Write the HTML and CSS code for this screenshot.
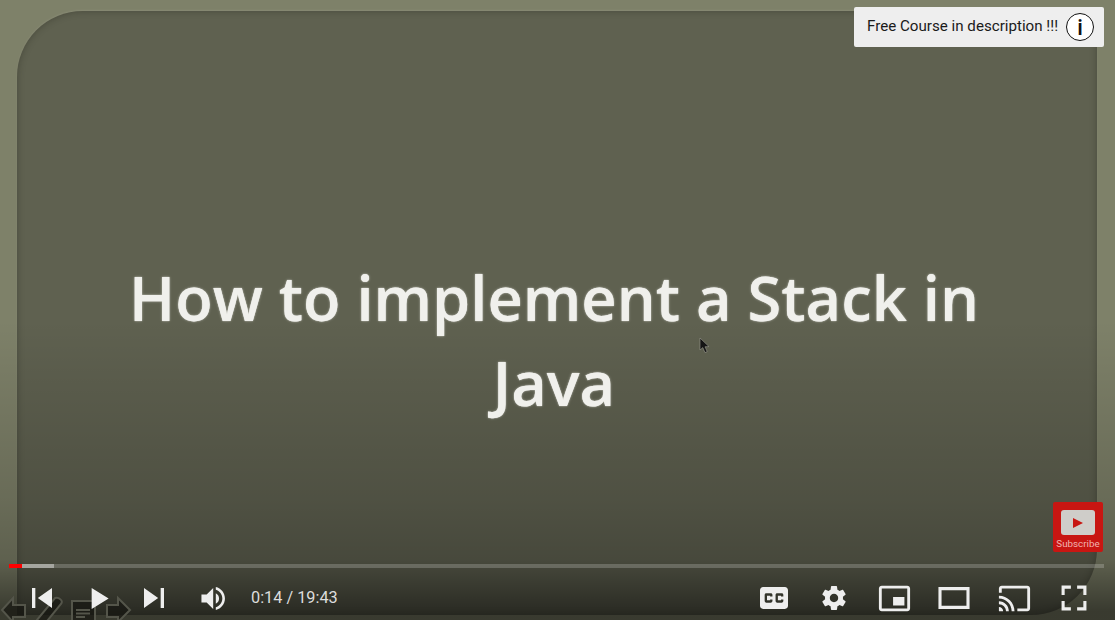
FILE: index.html
```html
<!DOCTYPE html>
<html lang="en">
<head>
    <meta charset="UTF-8">
    <title>How to implement a Stack in Java</title>
    <link rel="stylesheet" href="styles.css">
</head>
<body>
    <div class="player">
        <div class="slide">
            <h1 class="title">How to implement a Stack in<br>Java</h1>
        </div>

        <svg class="mouse" width="12" height="17" viewBox="0 0 12 17">
            <path d="M1 1 V13 L3.8 10.6 L6 15.6 L8.2 14.6 L6 9.8 L10 9.6 Z" />
        </svg>

        <div class="shade"></div>

        <!-- slide show buttons burnt into the video -->
        <svg class="slide-nav" width="140" height="30" viewBox="0 0 140 30">
            <path d="M2 20 L13 8 V15 H25 V27 H13 V32 Z" />
            <path d="M37 30 L55 8 Q58 7 60 9 Q63 11 61 14 L43 36 Z" />
            <path d="M72 11 H95 V34 H72 Z" />
            <path class="nav-line" d="M76 20 H90 M76 23.5 H90 M76 27 H85" />
            <path d="M130 20 L118 8 V15 H107 V27 H118 V32 Z" />
        </svg>

        <div class="card">
            <span class="card-text">Free Course in description !!!</span>
            <span class="card-icon">i</span>
        </div>

        <div class="subscribe">
            <div class="sub-logo"><span class="sub-play"></span></div>
            <span class="sub-text">Subscribe</span>
        </div>

        <div class="progress">
            <div class="loaded"></div>
            <div class="played"></div>
        </div>

        <div class="controls">
            <div class="controls-left">
                <button class="btn">
                    <svg class="ico-skip" viewBox="0 0 36 36"><path d="m 12,12 h 2 v 12 h -2 z m 3.5,6 8.5,6 V 12 z" /></svg>
                </button>
                <button class="btn btn-play">
                    <svg class="ico-play" viewBox="0 0 36 36"><path d="M 12,26 18.5,22 18.5,14 12,10 z M 18.5,22 25,18 25,18 18.5,14 z" /></svg>
                </button>
                <button class="btn">
                    <svg class="ico-skip" viewBox="0 0 36 36"><path d="M 12,24 20.5,18 12,12 V 24 z M 22,12 v 12 h 2 V 12 h -2 z" /></svg>
                </button>
                <button class="btn btn-volume">
                    <svg class="ico-play" viewBox="0 0 36 36"><path d="M8,21 L12,21 L17,26 L17,10 L12,15 L8,15 L8,21 Z M19,14 L19,22 C20.48,21.32 21.5,19.77 21.5,18 C21.5,16.26 20.48,14.74 19,14 ZM19,11.29 C21.89,12.15 24,14.83 24,18 C24,21.17 21.89,23.85 19,24.71 L19,26.77 C23.01,25.86 26,22.28 26,18 C26,13.72 23.01,10.14 19,9.23 L19,11.29 Z" /></svg>
                </button>
                <span class="time">0:14 / 19:43</span>
            </div>
            <div class="controls-right">
                <button class="btn-r">
                    <svg class="ico-wide" viewBox="0 0 36 36"><path d="M11,11 C9.89,11 9,11.9 9,13 L9,23 C9,24.1 9.89,25 11,25 L25,25 C26.1,25 27,24.1 27,23 L27,13 C27,11.9 26.1,11 25,11 L11,11 Z M17,17 L15.5,17 L15.5,16.5 L13.5,16.5 L13.5,19.5 L15.5,19.5 L15.5,19 L17,19 L17,20 C17,20.55 16.55,21 16,21 L13,21 C12.45,21 12,20.55 12,20 L12,16 C12,15.45 12.45,15 13,15 L16,15 C16.55,15 17,15.45 17,16 L17,17 L17,17 Z M24,17 L22.5,17 L22.5,16.5 L20.5,16.5 L20.5,19.5 L22.5,19.5 L22.5,19 L24,19 L24,20 C24,20.55 23.55,21 23,21 L20,21 C19.45,21 19,20.55 19,20 L19,16 C19,15.45 19.45,15 20,15 L23,15 C23.55,15 24,15.45 24,16 L24,17 L24,17 Z" /></svg>
                </button>
                <button class="btn-r">
                    <svg class="ico-gear" viewBox="0 0 36 36"><path d="m 23.94,18.78 c .03,-0.25 .05,-0.51 .05,-0.78 0,-0.27 -0.02,-0.52 -0.05,-0.78 l 1.68,-1.32 c .15,-0.12 .19,-0.33 .09,-0.51 l -1.6,-2.76 c -0.09,-0.17 -0.31,-0.24 -0.48,-0.17 l -1.99,.8 c -0.41,-0.32 -0.86,-0.58 -1.35,-0.78 l -0.30,-2.12 c -0.02,-0.19 -0.19,-0.33 -0.39,-0.33 l -3.2,0 c -0.2,0 -0.36,.14 -0.39,.33 l -0.30,2.12 c -0.48,.2 -0.93,.47 -1.35,.78 l -1.99,-0.8 c -0.18,-0.07 -0.39,0 -0.48,.17 l -1.6,2.76 c -0.10,.17 -0.05,.39 .09,.51 l 1.68,1.32 c -0.03,.25 -0.05,.52 -0.05,.78 0,.26 .02,.52 .05,.78 l -1.68,1.32 c -0.15,.12 -0.19,.33 -0.09,.51 l 1.6,2.76 c .09,.17 .31,.24 .48,.17 l 1.99,-0.8 c .41,.32 .86,.58 1.35,.78 l .30,2.12 c .02,.19 .19,.33 .39,.33 l 3.2,0 c .2,0 .36,-0.14 .39,-0.33 l .30,-2.12 c .48,-0.2 .93,-0.47 1.35,-0.78 l 1.99,.8 c .18,.07 .39,0 .48,-0.17 l 1.6,-2.76 c .09,-0.17 .05,-0.39 -0.09,-0.51 l -1.68,-1.32 0,0 z m -5.94,2.01 c -1.54,0 -2.8,-1.25 -2.8,-2.8 0,-1.54 1.25,-2.8 2.8,-2.8 1.54,0 2.8,1.25 2.8,2.8 0,1.54 -1.25,2.8 -2.8,2.8 l 0,0 z" /></svg>
                </button>
                <button class="btn-r">
                    <svg class="ico-mid" viewBox="0 0 36 36"><path d="M25,17 L17,17 L17,23 L25,23 L25,17 L25,17 Z M29,25 L29,10.98 C29,9.88 28.1,9 27,9 L9,9 C7.9,9 7,9.88 7,10.98 L7,25 C7,26.1 7.9,27 9,27 L27,27 C28.1,27 29,26.1 29,25 L29,25 Z M27,25.02 L9,25.02 L9,10.97 L27,10.97 L27,25.02 L27,25.02 Z" /></svg>
                </button>
                <button class="btn-r">
                    <svg class="ico-wide" viewBox="0 0 36 36"><path fill-rule="evenodd" d="m 28,11 0,14 -20,0 0,-14 z m -18,2 16,0 0,10 -16,0 0,-10 z" /></svg>
                </button>
                <button class="btn-r">
                    <svg class="ico-mid" viewBox="0 0 36 36"><path d="M27,9 L9,9 C7.9,9 7,9.9 7,11 L7,14 L9,14 L9,11 L27,11 L27,25 L20,25 L20,27 L27,27 C28.1,27 29,26.1 29,25 L29,11 C29,9.9 28.1,9 27,9 Z M7,24 L7,27 L10,27 C10,25.34 8.66,24 7,24 Z M7,20 L7,22 C9.76,22 12,24.24 12,27 L14,27 C14,23.13 10.87,20 7,20 Z M7,16 L7,18 C11.97,18 16,22.03 16,27 L18,27 C18,20.92 13.07,16 7,16 Z" /></svg>
                </button>
                <button class="btn-r">
                    <svg class="ico-wide" viewBox="0 0 36 36"><path d="m 10,16 2,0 0,-4 4,0 0,-2 L 10,10 l 0,6 0,0 z M 20,10 l 0,2 4,0 0,4 2,0 L 26,10 l -6,0 0,0 z M 24,24 l -4,0 0,2 L 26,26 l 0,-6 -2,0 0,4 0,0 z M 12,20 10,20 10,26 l 6,0 0,-2 -4,0 0,-4 0,0 z" /></svg>
                </button>
            </div>
        </div>
    </div>
</body>
</html>
```
FILE: styles.css
```css
*{
    margin: 0;
    padding: 0;
    box-sizing: border-box;
}
body {
    background: #000;
    overflow: hidden;
}
.player {
    position: relative;
    width: 1115px;
    height: 620px;
    overflow: hidden;
    background: #7e8169;
    padding: 11px 18px 5px 17px;
    font-family: Roboto, Arial, sans-serif;
}
.slide {
    height: 100%;
    background: #5f6150;
    border-radius: 66px 0 66px 0;
    box-shadow: inset 0 0 7px rgba(30, 30, 20, 0.35), 0 -1px 2px rgba(255, 255, 255, 0.08);
    display: flex;
    justify-content: center;
    padding-top: 244px;
    padding-right: 6px;
}
.title {
    position: relative;
    z-index: 1;
    font-family: "Open Sans", Arial, sans-serif;
    font-size: 61.4px;
    font-weight: 600;
    line-height: 85px;
    text-align: center;
    color: #f0f0ec;
    text-shadow: 0 0 1px #f0f0ec, 0 0 3px rgba(240, 240, 235, 0.4);
}
.slide-nav {
    position: absolute;
    left: 0;
    bottom: 0;
    fill: rgba(20, 20, 15, 0.65);
    stroke: #54554a;
    stroke-width: 2;
}
.nav-line {
    fill: none;
}
.mouse {
    position: absolute;
    z-index: 1;
    left: 699px;
    top: 337px;
    fill: #151515;
    stroke: #9a9a90;
    stroke-width: 0.6;
}
.shade {
    position: absolute;
    left: 0;
    right: 0;
    bottom: 0;
    height: 300px;
    background: linear-gradient(to bottom, rgba(0, 0, 0, 0), rgba(0, 0, 0, 0.08) 27%, rgba(0, 0, 0, 0.17) 60%, rgba(0, 0, 0, 0.25) 80%, rgba(0, 0, 0, 0.55) 97%);
}
.card {
    position: absolute;
    left: 854px;
    top: 7px;
    width: 250px;
    height: 40px;
    background: #eeeeee;
    border-radius: 2px;
    display: flex;
    align-items: center;
    justify-content: space-between;
    padding: 0 10px 2px 13px;
}
.card-text {
    font-size: 15.15px;
    color: #1a1a1a;
}
.card-icon {
    width: 28px;
    height: 28px;
    margin-top: 2px;
    border: 1.5px solid #111;
    border-radius: 50%;
    display: flex;
    align-items: center;
    justify-content: center;
    font-size: 22px;
    font-weight: 500;
    color: #111;
    background: #fff;
}
.subscribe {
    position: absolute;
    left: 1053px;
    top: 502px;
    width: 50px;
    height: 50px;
    background: #c81612;
    border-radius: 2px;
    display: flex;
    flex-direction: column;
    align-items: center;
    padding-top: 8px;
}
.sub-logo {
    width: 34px;
    height: 25px;
    background: #cfcdc9;
    border-radius: 3px;
    display: flex;
    align-items: center;
    justify-content: center;
}
.sub-play {
    width: 0;
    height: 0;
    border-left: 10px solid #c81612;
    border-top: 5.5px solid transparent;
    border-bottom: 5.5px solid transparent;
}
.sub-text {
    font-size: 9.8px;
    color: #f0b4b0;
    margin-top: 2px;
    line-height: 13px;
}
.progress {
    position: absolute;
    left: 9px;
    top: 564px;
    width: 1095px;
    height: 4px;
    background: rgba(255, 255, 255, 0.2);
}
.loaded {
    position: absolute;
    left: 0;
    top: 0;
    bottom: 0;
    width: 45px;
    background: rgba(255, 255, 255, 0.4);
}
.played {
    position: absolute;
    left: 0;
    top: 0;
    bottom: 0;
    width: 13px;
    background: #f00;
}
.controls {
    position: absolute;
    left: 14px;
    right: 11px;
    top: 568px;
    height: 60px;
    display: flex;
    justify-content: space-between;
    align-items: center;
}
.controls-left, .controls-right {
    display: flex;
    align-items: center;
}
.btn, .btn-r {
    height: 60px;
    border: none;
    background: none;
    display: flex;
    align-items: center;
    justify-content: center;
    fill: #eeeeee;
}
.btn {
    width: 56px;
}
.btn-r {
    width: 60px;
}
.btn-play {
    padding-left: 3px;
}
.btn-volume {
    margin-left: 4px;
}
.ico-skip {
    width: 60px;
    height: 60px;
    flex-shrink: 0;
}
.ico-play {
    width: 47px;
    height: 47px;
    flex-shrink: 0;
}
.ico-mid {
    width: 51px;
    height: 51px;
    flex-shrink: 0;
}
.ico-gear {
    width: 54px;
    height: 54px;
    flex-shrink: 0;
}
.ico-wide {
    width: 56px;
    height: 56px;
    flex-shrink: 0;
}
.time {
    margin-left: 9px;
    margin-bottom: 2px;
    font-size: 16.3px;
    color: #dddddd;
}
```
